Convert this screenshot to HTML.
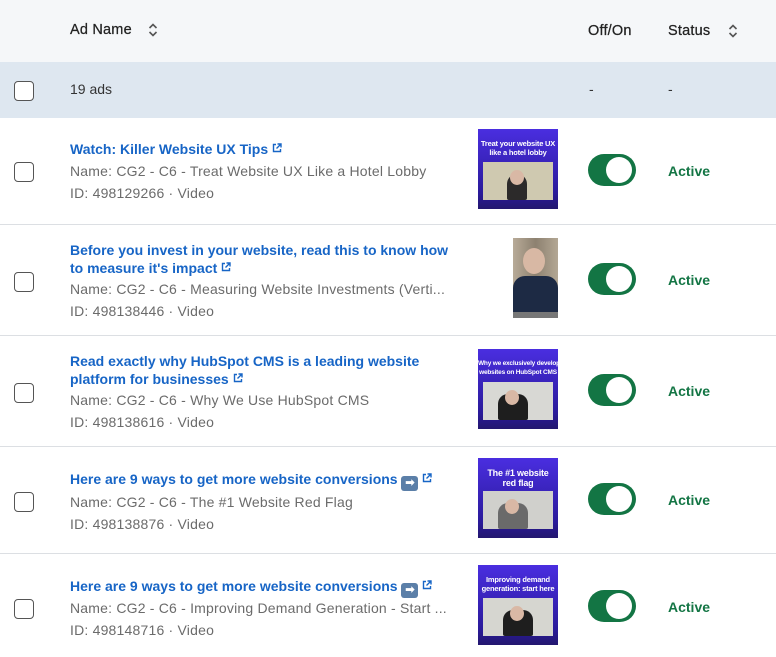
<!DOCTYPE html>
<html><head><meta charset="utf-8"><style>
*{margin:0;padding:0;box-sizing:border-box}
body{width:776px;height:657px;overflow:hidden;background:#fff;font-family:"Liberation Sans",sans-serif;font-size:14px;color:#333;position:relative}
.abs{position:absolute}
.hdr{left:0;top:0;width:776px;height:62px;background:#f5f7f9}
.sum{left:0;top:62px;width:776px;height:56px;background:#dee7f0}
.line{left:0;width:776px;height:1px;background:#dcdfe3}
.cb{position:absolute;left:14px;width:20px;height:20px;border:1.3px solid #555;border-radius:4px;background:#fff}
.ht{font-size:14.5px;color:#222;font-weight:normal;letter-spacing:0.2px;-webkit-text-stroke:0.25px #222}
.txt{position:absolute;left:70px;white-space:nowrap}
.t{color:#1765c6;font-weight:bold;line-height:18px;font-size:14px;letter-spacing:0}
.n{color:#6b6b6b;line-height:22px;margin-top:2px;letter-spacing:0.2px}
.tg{position:absolute;left:588px;width:48px;height:32px;border-radius:16px;background:#137544}
.tg:after{content:"";position:absolute;right:4px;top:3px;width:26px;height:26px;border-radius:50%;background:#fff}
.st{position:absolute;left:668px;color:#137544;font-weight:bold}
.th{position:absolute;left:478px;width:80px;height:80px;background:linear-gradient(#4a2ee0,#2a1a9a 80%,#23176e);overflow:hidden}
.th .h{position:absolute;left:0;top:10px;width:80px;text-align:center;color:#fff;font-weight:bold;font-size:8px;line-height:9px;letter-spacing:-0.2px;white-space:nowrap}
.th .v{position:absolute;left:5px;top:33px;width:70px;height:38px;background:#c9c6bc}
.th .p{position:absolute;left:24px;top:12px;width:20px;height:26px;border-radius:10px 10px 2px 2px;background:#2c2a2a}
.th .f{position:absolute;left:27px;top:8px;width:14px;height:15px;border-radius:50%;background:#d9b8a5}
.ext{display:inline-block;width:10px;height:10px;margin-left:4px;vertical-align:1px}
.ar{display:inline-block;width:17px;height:15px;background:#5b7fa8;border-radius:3px;vertical-align:-2px;color:#fff;font-size:11px;text-align:center;line-height:15px}
</style></head><body>
<div class="abs hdr"></div>
<div class="abs ht" style="left:70px;top:22px">Ad Name</div>
<svg class="abs" style="left:147px;top:22px" width="12" height="16" viewBox="0 0 12 16"><path d="M2.5 6 6 2.5 9.5 6M2.5 10 6 13.5 9.5 10" fill="none" stroke="#555" stroke-width="1.6"/></svg>
<div class="abs ht" style="left:588px;top:23px">Off/On</div>
<div class="abs ht" style="left:668px;top:23px">Status</div>
<svg class="abs" style="left:727px;top:23px" width="12" height="16" viewBox="0 0 12 16"><path d="M2.5 6 6 2.5 9.5 6M2.5 10 6 13.5 9.5 10" fill="none" stroke="#555" stroke-width="1.6"/></svg>
<div class="abs sum"></div>
<div class="cb" style="top:81px;border-color:#555"></div>
<div class="abs" style="left:70px;top:81px;color:#333">19 ads</div>
<div class="abs" style="left:589px;top:81px">-</div>
<div class="abs" style="left:668px;top:81px">-</div>

<div class="abs line" style="top:224px"></div>
<div class="abs line" style="top:335px"></div>
<div class="abs line" style="top:446px"></div>
<div class="abs line" style="top:553px"></div>

<!-- row1 -->
<div class="cb" style="top:162px"></div>
<div class="txt" style="top:140px"><div class="t">Watch: Killer Website UX Tips<svg class="ext" viewBox="0 0 10 10"><path d="M4 1.5H1.5v7h7V6M5.5 1h3.5v3.5M9 1 4.5 5.5" fill="none" stroke="#1765c6" stroke-width="1.4"/></svg></div><div class="n">Name: CG2 - C6 - Treat Website UX Like a Hotel Lobby<br>ID: 498129266 · Video</div></div>
<div class="th" style="top:129px"><div class="h" style="font-size:7.5px">Treat your website UX<br>like a hotel lobby</div><div class="v" style="background:#cfc9b0"><div class="p"></div><div class="f"></div></div></div>
<div class="tg" style="top:154px"></div>
<div class="st" style="top:163px">Active</div>

<!-- row2 -->
<div class="cb" style="top:272px"></div>
<div class="txt" style="top:241px"><div class="t">Before you invest in your website, read this to know how<br>to measure it's impact<svg class="ext" viewBox="0 0 10 10"><path d="M4 1.5H1.5v7h7V6M5.5 1h3.5v3.5M9 1 4.5 5.5" fill="none" stroke="#1765c6" stroke-width="1.4"/></svg></div><div class="n" style="margin-top:1px">Name: CG2 - C6 - Measuring Website Investments (Verti...<br>ID: 498138446 · Video</div></div>
<div class="abs" style="left:513px;top:238px;width:45px;height:80px;background:linear-gradient(90deg,#b8ab98,#8d8170 50%,#b3a794);overflow:hidden"><div class="abs" style="left:10px;top:10px;width:22px;height:26px;border-radius:50%;background:#d8b8a4"></div><div class="abs" style="left:0;top:38px;width:45px;height:38px;border-radius:12px 12px 0 0;background:#1d2a44"></div><div class="abs" style="left:0;top:74px;width:45px;height:6px;background:#777"></div></div>
<div class="tg" style="top:263px"></div>
<div class="st" style="top:272px">Active</div>

<!-- row3 -->
<div class="cb" style="top:383px"></div>
<div class="txt" style="top:352px"><div class="t">Read exactly why HubSpot CMS is a leading website<br>platform for businesses<svg class="ext" viewBox="0 0 10 10"><path d="M4 1.5H1.5v7h7V6M5.5 1h3.5v3.5M9 1 4.5 5.5" fill="none" stroke="#1765c6" stroke-width="1.4"/></svg></div><div class="n" style="margin-top:1px">Name: CG2 - C6 - Why We Use HubSpot CMS<br>ID: 498138616 · Video</div></div>
<div class="th" style="top:349px"><div class="h" style="font-size:6.5px;line-height:9px">Why we exclusively develop<br>websites on HubSpot CMS</div><div class="v" style="background:#d8d8d4"><div class="p" style="background:#1e1e1e;width:30px;left:15px"></div><div class="f" style="left:22px"></div></div></div>
<div class="tg" style="top:374px"></div>
<div class="st" style="top:383px">Active</div>

<!-- row4 -->
<div class="cb" style="top:492px"></div>
<div class="txt" style="top:470px"><div class="t">Here are 9 ways to get more website conversions <span class="ar">➡</span><svg class="ext" viewBox="0 0 10 10"><path d="M4 1.5H1.5v7h7V6M5.5 1h3.5v3.5M9 1 4.5 5.5" fill="none" stroke="#1765c6" stroke-width="1.4"/></svg></div><div class="n" style="margin-top:0">Name: CG2 - C6 - The #1 Website Red Flag<br>ID: 498138876 · Video</div></div>
<div class="th" style="top:458px"><div class="h" style="font-size:9px;line-height:10px">The #1 website<br>red flag</div><div class="v" style="background:#d0d0cc"><div class="p" style="background:#6a6a6a;width:30px;left:15px"></div><div class="f" style="left:22px"></div></div></div>
<div class="tg" style="top:483px"></div>
<div class="st" style="top:492px">Active</div>

<!-- row5 -->
<div class="cb" style="top:599px"></div>
<div class="txt" style="top:577px"><div class="t">Here are 9 ways to get more website conversions <span class="ar">➡</span><svg class="ext" viewBox="0 0 10 10"><path d="M4 1.5H1.5v7h7V6M5.5 1h3.5v3.5M9 1 4.5 5.5" fill="none" stroke="#1765c6" stroke-width="1.4"/></svg></div><div class="n" style="margin-top:-1px">Name: CG2 - C6 - Improving Demand Generation - Start ...<br>ID: 498148716 · Video</div></div>
<div class="th" style="top:565px"><div class="h" style="font-size:7.5px;line-height:9px">Improving demand<br>generation: start here</div><div class="v" style="background:#d6d6d0"><div class="p" style="background:#1e1e1e;width:30px;left:20px"></div><div class="f" style="left:27px"></div></div></div>
<div class="tg" style="top:590px"></div>
<div class="st" style="top:599px">Active</div>
</body></html>
